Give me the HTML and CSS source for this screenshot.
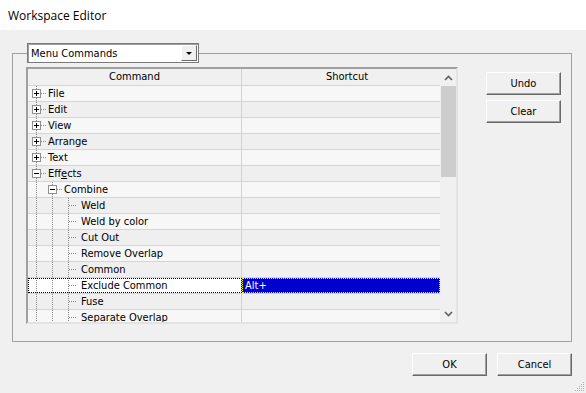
FILE: index.html
```html
<!DOCTYPE html>
<html>

<head>
    <title>Workspace Editor</title>
    <link rel="stylesheet" href="styles.css">
</head>

<body>
    <div class="window">
        <div class="titlebar">Workspace Editor</div>

        <div class="dialog">
            <fieldset class="group">
                <legend>
                    <div class="combo">
                        <span class="combo-text">Menu Commands</span>
                        <span class="combo-btn"><span class="arrow"></span></span>
                    </div>
                </legend>

                <div class="group-body">
                    <div class="list">
                        <div class="table">
                            <div class="header">
                                <div class="cmd">Command</div>
                                <div class="key">Shortcut</div>
                            </div>
                            <div class="rows">
                                <div class="row"><div class="cmd"><span class="slot node plus"></span><span class="label">File</span></div><div class="key"></div></div>
                                <div class="row"><div class="cmd"><span class="slot node plus"></span><span class="label">Edit</span></div><div class="key"></div></div>
                                <div class="row"><div class="cmd"><span class="slot node plus"></span><span class="label">View</span></div><div class="key"></div></div>
                                <div class="row"><div class="cmd"><span class="slot node plus"></span><span class="label">Arrange</span></div><div class="key"></div></div>
                                <div class="row"><div class="cmd"><span class="slot node plus"></span><span class="label">Text</span></div><div class="key"></div></div>
                                <div class="row"><div class="cmd"><span class="slot node"></span><span class="label">Eff<u>e</u>cts</span></div><div class="key"></div></div>
                                <div class="row"><div class="cmd"><span class="slot v"></span><span class="slot node"></span><span class="label">Combine</span></div><div class="key"></div></div>
                                <div class="row"><div class="cmd"><span class="slot v"></span><span class="slot v"></span><span class="slot leaf"></span><span class="label leaf-label">Weld</span></div><div class="key"></div></div>
                                <div class="row"><div class="cmd"><span class="slot v"></span><span class="slot v"></span><span class="slot leaf"></span><span class="label leaf-label">Weld by color</span></div><div class="key"></div></div>
                                <div class="row"><div class="cmd"><span class="slot v"></span><span class="slot v"></span><span class="slot leaf"></span><span class="label leaf-label">Cut Out</span></div><div class="key"></div></div>
                                <div class="row"><div class="cmd"><span class="slot v"></span><span class="slot v"></span><span class="slot leaf"></span><span class="label leaf-label">Remove Overlap</span></div><div class="key"></div></div>
                                <div class="row"><div class="cmd"><span class="slot v"></span><span class="slot v"></span><span class="slot leaf"></span><span class="label leaf-label">Common</span></div><div class="key"></div></div>
                                <div class="row selected"><div class="cmd"><span class="slot v"></span><span class="slot v"></span><span class="slot leaf"></span><span class="label leaf-label">Exclude Common</span></div><div class="key">Alt+</div></div>
                                <div class="row"><div class="cmd"><span class="slot v"></span><span class="slot v"></span><span class="slot leaf"></span><span class="label leaf-label">Fuse</span></div><div class="key"></div></div>
                                <div class="row"><div class="cmd"><span class="slot v"></span><span class="slot v"></span><span class="slot leaf"></span><span class="label leaf-label">Separate Overlap</span></div><div class="key"></div></div>
                            </div>
                        </div>

                        <div class="scrollbar">
                            <div class="sb-btn">
                                <svg width="9" height="6" viewBox="0 0 9 6"><polyline points="1,5 4.5,1.5 8,5" fill="none" stroke="#606060" stroke-width="1.6"/></svg>
                            </div>
                            <div class="track"><div class="thumb"></div></div>
                            <div class="sb-btn">
                                <svg width="9" height="6" viewBox="0 0 9 6"><polyline points="1,1 4.5,4.5 8,1" fill="none" stroke="#606060" stroke-width="1.6"/></svg>
                            </div>
                        </div>
                    </div>

                    <div class="side-buttons">
                        <button class="btn">Undo</button>
                        <button class="btn">Clear</button>
                    </div>
                </div>
            </fieldset>

            <div class="actions">
                <button class="btn">OK</button>
                <button class="btn">Cancel</button>
            </div>
        </div>

        <svg class="grip" width="12" height="12" viewBox="0 0 12 12">
            <g fill="#b0b0b0">
                <rect x="10" y="2" width="1" height="1"/>
                <rect x="8" y="4" width="1" height="1"/><rect x="10" y="4" width="1" height="1"/>
                <rect x="6" y="6" width="1" height="1"/><rect x="8" y="6" width="1" height="1"/><rect x="10" y="6" width="1" height="1"/>
                <rect x="4" y="8" width="1" height="1"/><rect x="6" y="8" width="1" height="1"/><rect x="8" y="8" width="1" height="1"/><rect x="10" y="8" width="1" height="1"/>
                <rect x="2" y="10" width="1" height="1"/><rect x="4" y="10" width="1" height="1"/><rect x="6" y="10" width="1" height="1"/><rect x="8" y="10" width="1" height="1"/><rect x="10" y="10" width="1" height="1"/>
            </g>
        </svg>
    </div>
</body>

</html>
```

FILE: styles.css
```css
body {
    margin: 0;
    padding: 0;
    background-color: #f0f0f0;
    font-family: "DejaVu Sans", sans-serif;
    font-stretch: condensed;
    font-size: 11px;
    color: #000;
}

.window {
    position: relative;
    width: 586px;
    height: 393px;
    background-color: #f0f0f0;
    overflow: hidden;
}

.titlebar {
    height: 30px;
    line-height: 32px;
    padding-left: 8px;
    background-color: #fff;
    font-family: "Open Sans", sans-serif;
    font-stretch: normal;
    font-size: 12px;
    color: #000;
}

.dialog {
    padding: 13px 14px 0 12px;
}

/* group box with the combo as its caption */
.group {
    margin: 0;
    padding: 4px 10px 17px 13px;
    border: 1px solid #a0a0a0;
    min-inline-size: 0;
}

.group legend {
    padding: 0;
    margin-left: 1px;
}

.combo {
    display: flex;
    align-items: center;
    width: 172px;
    height: 20px;
    box-sizing: border-box;
    border: 1px solid #7a7a7a;
    box-shadow: inset 1px 1px 0 #a0a0a0;
    background-color: #fff;
}

.combo-text {
    flex: 1;
    padding-left: 3px;
}

.combo-btn {
    display: flex;
    align-items: center;
    justify-content: center;
    width: 16px;
    height: 16px;
    margin-right: 1px;
    box-sizing: border-box;
    background-color: #f0f0f0;
    border: 1px solid;
    border-color: #fff #696969 #696969 #fff;
}

.arrow {
    width: 0;
    height: 0;
    border-left: 3px solid transparent;
    border-right: 3px solid transparent;
    border-top: 3px solid #000;
}

.group-body {
    display: flex;
    align-items: flex-start;
}

/* list */
.list {
    display: flex;
    width: 432px;
    height: 257px;
    box-sizing: border-box;
    border: 2px solid;
    border-color: #a0a0a0 #e3e3e3 #e3e3e3 #a0a0a0;
    box-shadow: inset 1px 1px 0 #696969;
    background-color: #f7f7f7;
    overflow: hidden;
}

.table {
    width: 412px;
    flex: none;
}

.header {
    display: flex;
    height: 17px;
    line-height: 15px;
    box-sizing: border-box;
    border-bottom: 1px solid #d5d5d5;
    background-color: #f0f0f0;
}

.header .cmd,
.header .key {
    text-align: center;
}

.header .key {
    padding-left: 12px;
}

.cmd {
    width: 213px;
    flex: none;
    border-right: 1px solid #d2d2d2;
}

.key {
    flex: 1;
    padding-left: 2px;
}

.row {
    display: flex;
    height: 16px;
    box-sizing: border-box;
    border-bottom: 1px solid #d5d5d5;
    line-height: 15px;
}

.rows .row:nth-child(odd) {
    background-color: #f7f7f7;
}

.rows .row:nth-child(even) {
    background-color: #efefef;
}

.row .cmd {
    display: flex;
    padding-left: 0;
    box-sizing: border-box;
    width: 214px;
}

.slot {
    flex: none;
    position: relative;
    width: 16px;
    height: 15px;
}

.v,
.node {
    background: repeating-linear-gradient(#8c8c8c 0 1px, transparent 1px 2px) 8px 0 / 1px 15px no-repeat;
}

.leaf {
    background:
        repeating-linear-gradient(#8c8c8c 0 1px, transparent 1px 2px) 8px 0 / 1px 15px no-repeat,
        repeating-linear-gradient(90deg, #8c8c8c 0 1px, transparent 1px 2px) 9px 7px / 8px 1px no-repeat;
}

.node::before {
    content: "";
    position: absolute;
    left: 4px;
    top: 3px;
    width: 9px;
    height: 9px;
    box-sizing: border-box;
    border: 1px solid #919191;
    background: #fff linear-gradient(#000, #000) 1px 3px / 5px 1px no-repeat;
}

.node.plus::before {
    background:
        linear-gradient(#000, #000) 1px 3px / 5px 1px no-repeat,
        linear-gradient(#000, #000) 3px 1px / 1px 5px no-repeat,
        #fff;
}

.node::after {
    content: "";
    position: absolute;
    left: 13px;
    top: 7px;
    width: 5px;
    height: 1px;
    background: repeating-linear-gradient(90deg, #8c8c8c 0 1px, transparent 1px 2px);
}

.label {
    margin-left: 4px;
    white-space: nowrap;
}

.leaf-label {
    margin-left: 5px;
}

.selected .cmd {
    background-color: #fff;
    outline: 1px dotted #000;
    outline-offset: -1px;
}

.selected .key {
    background-color: #0000cd;
    color: #fff;
    outline: 1px dotted #ffff00;
    outline-offset: -1px;
    padding-left: 3px;
}

/* scrollbar */
.scrollbar {
    display: flex;
    flex-direction: column;
    width: 16px;
    flex: none;
    background-color: #f0f0f0;
}

.sb-btn {
    display: flex;
    align-items: center;
    justify-content: center;
    height: 17px;
}

.track {
    flex: 1;
}

.thumb {
    height: 91px;
    margin-left: 1px;
    background-color: #cdcdcd;
}

/* buttons */
.side-buttons {
    display: flex;
    flex-direction: column;
    gap: 5px;
    margin-left: 28px;
    margin-top: 5px;
}

.btn {
    width: 75px;
    height: 23px;
    padding: 0;
    box-sizing: border-box;
    background-color: #f0f0f0;
    border: 1px solid;
    border-color: #fff #696969 #696969 #fff;
    box-shadow: inset -1px -1px 0 #a0a0a0;
    font-family: "DejaVu Sans", sans-serif;
    font-stretch: condensed;
    font-size: 11px;
    color: #000;
}

.actions {
    display: flex;
    justify-content: flex-end;
    gap: 10px;
    margin-top: 11px;
}

.grip {
    position: absolute;
    right: 1px;
    bottom: 1px;
}
```
